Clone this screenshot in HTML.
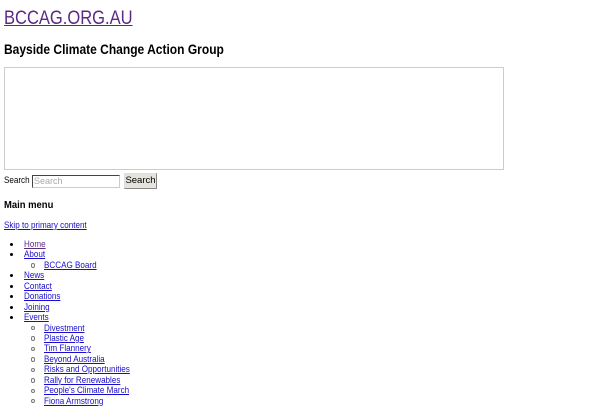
<!DOCTYPE html>
<html><head><style>
body{margin:0;background:#fff;font-family:"Liberation Sans",sans-serif;color:#000;position:relative;width:600px;height:400px;overflow:hidden}
a{color:#1a0dcc}
.a{position:absolute;left:4px;white-space:nowrap;transform-origin:0 0}
ul{margin:0;padding:0;list-style:none}
li{position:relative;font-size:9.2px;line-height:10.45px;height:10.45px;white-space:nowrap}
li a{display:inline-block;transform:scaleX(0.88);transform-origin:0 0}
li.t{padding-left:20px}
li.t::before{content:"";position:absolute;left:6px;top:4px;width:3px;height:3px;background:#000;border-radius:50%}
li.s{padding-left:40px}
li.s::before{content:"";position:absolute;left:27px;top:3.5px;width:2.4px;height:2.4px;border:0.7px solid #777;border-radius:50%}
</style></head><body>
<div class="a" style="top:8px;font-size:19px;transform:scaleX(0.87)"><a href="#" style="color:#5b2a86">BCCAG.ORG.AU</a></div>
<div class="a" style="top:42px;font-size:13.5px;font-weight:bold;transform:scaleX(0.89)">Bayside Climate Change Action Group</div>
<div style="position:absolute;left:4px;top:67px;width:498px;height:101px;border:1px solid #ccc"></div>
<div class="a" style="top:175px;font-size:9.5px;line-height:12px;transform:scaleX(0.85)">Search</div>
<div style="position:absolute;left:32px;top:175px;width:85px;height:11px;border:1px solid #ccc;border-top-color:#444;border-left-color:#444;font-size:9px;color:#aaa;line-height:11px;padding-left:1px">Search</div>
<div style="position:absolute;left:124px;top:173px;width:31px;height:14px;background:#e6e3dc;border:1px solid #888;border-top-color:#ddd;border-left-color:#ddd;font-size:9.5px;line-height:14px;text-align:center">Search</div>
<div class="a" style="top:199px;font-size:10.5px;font-weight:bold;transform:scaleX(0.9)">Main menu</div>
<div class="a" style="top:220px;font-size:9.2px;transform:scaleX(0.88)"><a href="#">Skip to primary content</a></div>
<ul style="position:absolute;left:4px;top:239px;width:300px">
<li class="t"><a href="#" style="color:#5b2a86">Home</a></li>
<li class="t"><a href="#">About</a></li>
<li class="s"><a href="#">BCCAG Board</a></li>
<li class="t"><a href="#">News</a></li>
<li class="t"><a href="#">Contact</a></li>
<li class="t"><a href="#">Donations</a></li>
<li class="t"><a href="#">Joining</a></li>
<li class="t"><a href="#">Events</a></li>
<li class="s"><a href="#">Divestment</a></li>
<li class="s"><a href="#">Plastic Age</a></li>
<li class="s"><a href="#">Tim Flannery</a></li>
<li class="s"><a href="#">Beyond Australia</a></li>
<li class="s"><a href="#">Risks and Opportunities</a></li>
<li class="s"><a href="#">Rally for Renewables</a></li>
<li class="s"><a href="#">People's Climate March</a></li>
<li class="s"><a href="#">Fiona Armstrong</a></li>
</ul>
</body></html>
